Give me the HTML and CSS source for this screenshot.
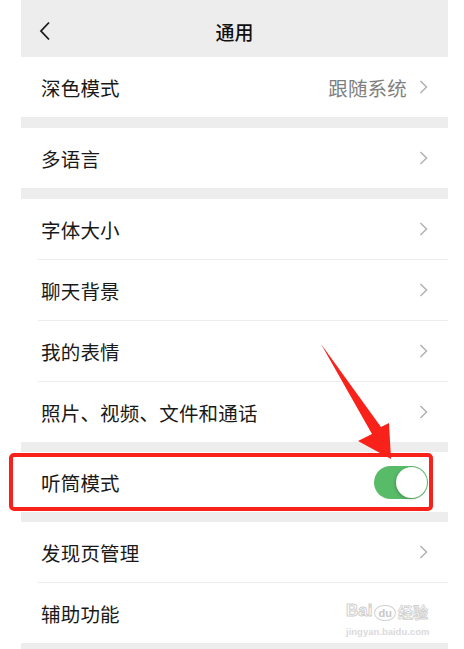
FILE: index.html
```html
<!DOCTYPE html>
<html lang="zh-CN">
<head>
<meta charset="utf-8">
<title>通用</title>
<link rel="stylesheet" href="styles.css">
</head>
<body>
<div class="screen">
  <div class="nav">
    <svg class="back" width="12" height="20" viewBox="0 0 12 20"><path d="M10 1.5 L2 10 L10 18.5" fill="none" stroke="#1a1a1a" stroke-width="1.8"/></svg>
    <div class="title">通用</div>
  </div>

  <div class="group">
    <div class="row"><span class="label">深色模式</span><span class="value">跟随系统</span><svg class="chev" width="9" height="14" viewBox="0 0 9 14"><path d="M1.5 1 L7.5 7 L1.5 13" fill="none" stroke="#b2b2b2" stroke-width="1.5"/></svg></div>
  </div>

  <div class="group">
    <div class="row"><span class="label">多语言</span><svg class="chev" width="9" height="14" viewBox="0 0 9 14"><path d="M1.5 1 L7.5 7 L1.5 13" fill="none" stroke="#b2b2b2" stroke-width="1.5"/></svg></div>
  </div>

  <div class="group">
    <div class="row"><span class="label">字体大小</span><svg class="chev" width="9" height="14" viewBox="0 0 9 14"><path d="M1.5 1 L7.5 7 L1.5 13" fill="none" stroke="#b2b2b2" stroke-width="1.5"/></svg></div>
    <div class="row"><span class="label">聊天背景</span><svg class="chev" width="9" height="14" viewBox="0 0 9 14"><path d="M1.5 1 L7.5 7 L1.5 13" fill="none" stroke="#b2b2b2" stroke-width="1.5"/></svg></div>
    <div class="row"><span class="label">我的表情</span><svg class="chev" width="9" height="14" viewBox="0 0 9 14"><path d="M1.5 1 L7.5 7 L1.5 13" fill="none" stroke="#b2b2b2" stroke-width="1.5"/></svg></div>
    <div class="row"><span class="label">照片、视频、文件和通话</span><svg class="chev" width="9" height="14" viewBox="0 0 9 14"><path d="M1.5 1 L7.5 7 L1.5 13" fill="none" stroke="#b2b2b2" stroke-width="1.5"/></svg></div>
  </div>

  <div class="group">
    <div class="row"><span class="label">听筒模式</span><span class="toggle"><span class="knob"></span></span></div>
  </div>

  <div class="group">
    <div class="row"><span class="label">发现页管理</span><svg class="chev" width="9" height="14" viewBox="0 0 9 14"><path d="M1.5 1 L7.5 7 L1.5 13" fill="none" stroke="#b2b2b2" stroke-width="1.5"/></svg></div>
    <div class="row"><span class="label">辅助功能</span></div>
  </div>
</div>

<div class="highlight"></div>
<svg class="arrow" width="464" height="649" viewBox="0 0 464 649">
  <polygon points="321,344 381,427 389,423 391,459 358,441 372,434" fill="#f8221a"/>
</svg>

<div class="watermark">
  <div class="wm-top"><span class="wm-bai">Bai</span><span class="wm-du">du</span><span class="wm-jy">经验</span></div>
  <div class="wm-url">jingyan.baidu.com</div>
</div>
</body>
</html>
```
FILE: styles.css
```css
html, body {
  margin: 0;
  padding: 0;
  background: #ffffff;
}
body {
  font-family: "Noto Sans CJK SC", "Noto Sans", sans-serif;
  color: #191919;
  width: 464px;
  height: 649px;
  overflow: hidden;
  position: relative;
}
.screen {
  margin-left: 21px;
  width: 427px;
  height: 649px;
  background: #ededed;
  overflow: hidden;
}
.nav {
  height: 57px;
  display: flex;
  align-items: center;
  justify-content: center;
  position: relative;
  box-sizing: border-box;
  padding-top: 6px;
}
.back {
  position: absolute;
  left: 18px;
  top: 21px;
}
.title {
  font-size: 19px;
  font-weight: 500;
  color: #111;
}
.group {
  background: #fff;
  margin-bottom: 11px;
}
.group:nth-of-type(4), .group:nth-of-type(5) {
  margin-bottom: 10px;
}
.row {
  height: 60px;
  display: flex;
  align-items: center;
  padding-left: 20px;
  padding-right: 20px;
  position: relative;
}
.row + .row {
  border-top: 1px solid #ececec;
  margin-left: 17px;
  padding-left: 3px;
}
.label {
  font-size: 19.5px;
  flex: 1;
  letter-spacing: 0.2px;
}
.value {
  font-size: 19.5px;
  color: #7f7f7f;
  margin-right: 12px;
  letter-spacing: 0.2px;
}
.chev {
  display: block;
}
.toggle {
  width: 54px;
  height: 33px;
  border-radius: 17px;
  background: #57bb68;
  position: relative;
}
.knob {
  position: absolute;
  right: 1px;
  top: 1px;
  width: 31px;
  height: 31px;
  border-radius: 50%;
  background: #fff;
  box-shadow: -1px 1px 3px rgba(0,0,0,0.2);
}
.highlight {
  position: absolute;
  left: 9px;
  top: 453px;
  width: 424px;
  height: 58px;
  box-sizing: border-box;
  border: 4.5px solid #f8221a;
  border-radius: 5px;
}
.arrow {
  position: absolute;
  left: 0;
  top: 0;
  pointer-events: none;
}
.watermark {
  position: absolute;
  left: 346px;
  top: 598px;
  width: 90px;
  color: #d4d4d4;
  font-family: "Liberation Sans", sans-serif;
  text-align: center;
}
.wm-top {
  display: flex;
  align-items: center;
  height: 26px;
  font-size: 17px;
  font-weight: bold;
}
.wm-bai {
  color: transparent;
  -webkit-text-stroke: 1px #d0d0d0;
}
.wm-du {
  font-size: 11px;
  border: 1.5px solid #d0d0d0;
  border-radius: 50%;
  padding: 1px 3px;
  margin: 4px 2px 0;
  color: #c8c8c8;
}
.wm-jy {
  font-family: "Noto Sans CJK SC", sans-serif;
  font-size: 15px;
  color: transparent;
  -webkit-text-stroke: 0.8px #d0d0d0;
}
.wm-url {
  font-size: 9.5px;
  font-weight: bold;
  color: #dadada;
  margin-top: 2px;
  text-align: left;
}
```
